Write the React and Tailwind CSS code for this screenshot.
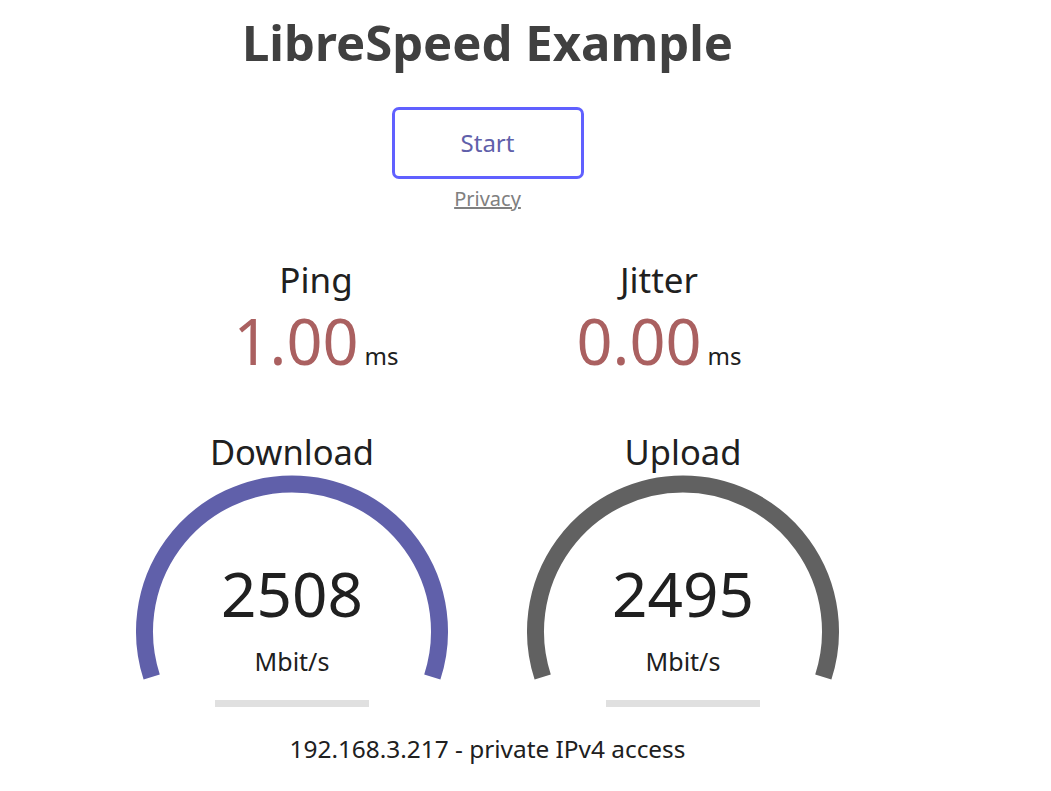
const FONT = { fontFamily: '"Noto Sans", "Open Sans", sans-serif' };

function Gauge({ label, value, color }) {
  return (
    <div className="flex w-[320px] flex-col items-center">
      <div className="mt-[63px] text-[34.5px] leading-none text-[#202020]">{label}</div>
      <div className="relative h-[230px] w-[320px]">
        <svg className="absolute inset-0" width="320" height="230" viewBox="0 0 320 230">
          <path
            d="M 19.7 207 A 147.5 147.5 0 1 1 300.3 207"
            fill="none"
            stroke={color}
            strokeWidth="17"
          />
        </svg>
        <div className="relative flex flex-col items-center pt-[92px]">
          <div className="text-[62px] leading-none text-[#202020]">{value}</div>
          <div className="mt-[25px] text-[25px] leading-none text-[#202020]">Mbit/s</div>
        </div>
      </div>
      <div className="h-[7px] w-[154px] bg-[#e0e0e0]" />
    </div>
  );
}

function Stat({ label, value }) {
  return (
    <div className="flex w-[280px] flex-col items-center">
      <div className="text-[35px] leading-none text-[#202020]">{label}</div>
      <div className="mt-[12px] flex items-baseline gap-[6px]">
        <span className="text-[63px] leading-none text-[#aa6060]">{value}</span>
        <span className="text-[24px] leading-none text-[#202020]">ms</span>
      </div>
    </div>
  );
}

export default function App() {
  return (
    <div className="min-h-screen bg-white">
      <div className="flex w-[975px] flex-col items-center text-center" style={FONT}>
        <h1 className="mt-[18px] text-[49px] font-bold leading-none text-[#404040]">LibreSpeed Example</h1>

        <button
          type="button"
          className="mt-[40px] flex h-[72px] w-[192px] items-center justify-center rounded-[7px] border-[3px] border-[#6060ff] text-[24px] text-[#6060aa]"
        >
          Start
        </button>
        <a href="#" className="mt-[10px] text-[20px] leading-none text-[#808080] underline">
          Privacy
        </a>

        <div className="mt-[53px] flex gap-[63px]">
          <Stat label="Ping" value="1.00" />
          <Stat label="Jitter" value="0.00" />
        </div>

        <div className="flex gap-[71px]">
          <Gauge label="Download" value="2508" color="#6060aa" />
          <Gauge label="Upload" value="2495" color="#616161" />
        </div>

        <div className="mt-[30px] text-[24.4px] leading-none text-[#202020]">192.168.3.217 - private IPv4 access</div>
      </div>
    </div>
  );
}
